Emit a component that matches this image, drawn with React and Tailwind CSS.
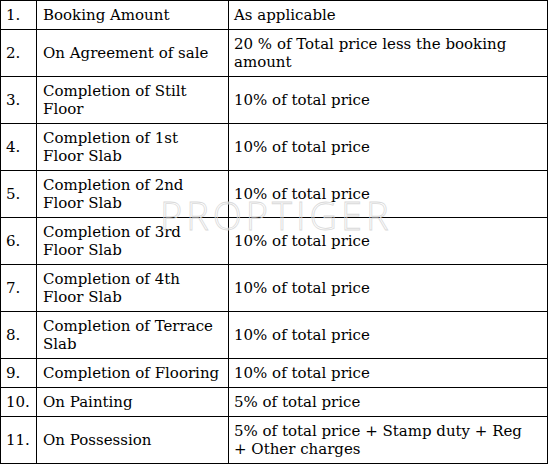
import React from 'react';

const rows = [
  ['1.', 'Booking Amount', 'As applicable'],
  ['2.', 'On Agreement of sale', '20 % of Total price less the booking amount'],
  ['3.', 'Completion of Stilt Floor', '10% of total price'],
  ['4.', 'Completion of 1st Floor Slab', '10% of total price'],
  ['5.', 'Completion of 2nd Floor Slab', '10% of total price'],
  ['6.', 'Completion of 3rd Floor Slab', '10% of total price'],
  ['7.', 'Completion of 4th Floor Slab', '10% of total price'],
  ['8.', 'Completion of Terrace Slab', '10% of total price'],
  ['9.', 'Completion of Flooring', '10% of total price'],
  ['10.', 'On Painting', '5% of total price'],
  ['11.', 'On Possession', '5% of total price + Stamp duty + Reg + Other charges'],
];

function App() {
  return (
    <div className="relative w-[549px] h-[464px] bg-white" style={{ fontFamily: '"DejaVu Serif", serif' }}>
      <table className="w-[548px] border-collapse table-fixed text-[15px] leading-[18px] text-black">
        <colgroup>
          <col className="w-[36px]" />
          <col className="w-[192px]" />
          <col />
        </colgroup>
        <tbody>
          {rows.map((r) => (
            <tr key={r[0]}>
              <td className="border border-black pl-[5px] pr-0 py-[5px] align-middle whitespace-nowrap">{r[0]}</td>
              <td className="border border-black pl-[6px] pr-[6px] py-[5px] align-middle">{r[1]}</td>
              <td className="border border-black pl-[5px] pr-[12px] py-[5px] align-middle">{r[2]}</td>
            </tr>
          ))}
        </tbody>
      </table>
      <div
        className="absolute left-[160px] top-[196px] text-[38px] leading-none tracking-[4px] font-light text-transparent [-webkit-text-stroke:0.8px_#dadada] pointer-events-none select-none"
        style={{ fontFamily: '"Open Sans", sans-serif' }}
      >
        PROPTIGER
      </div>
    </div>
  );
}

export default App;
